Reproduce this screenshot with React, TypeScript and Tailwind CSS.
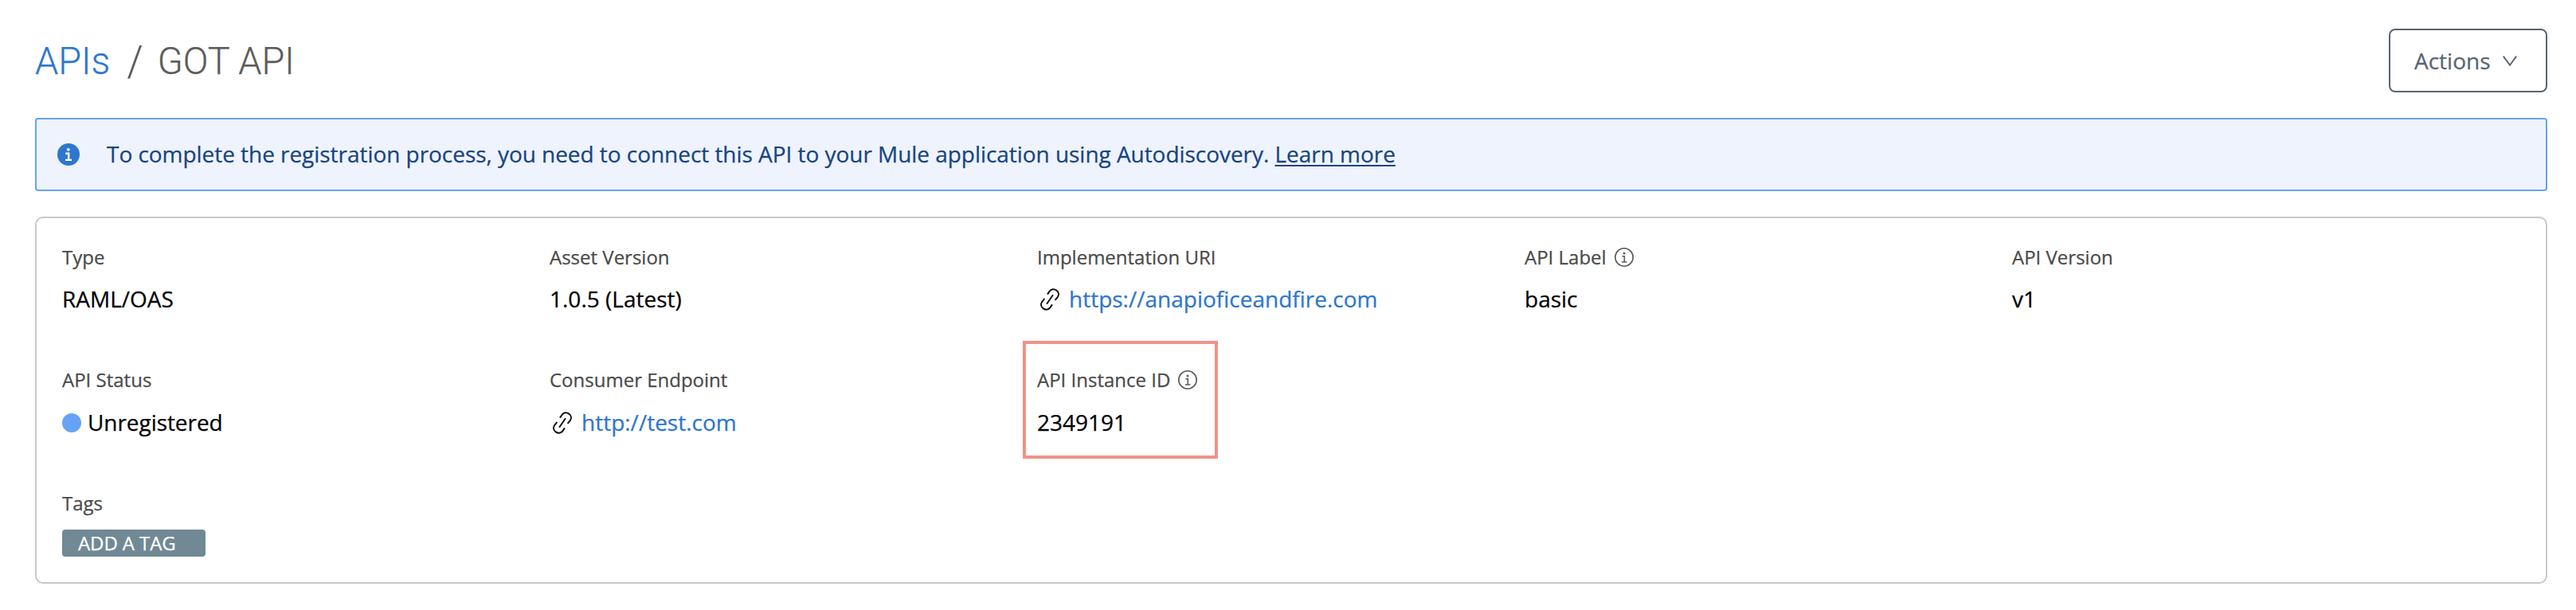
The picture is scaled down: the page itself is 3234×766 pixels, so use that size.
import type { ReactNode } from "react";

function InfoOutline() {
  return (
    <svg viewBox="0 0 24 24" className="ml-[10px] h-6 w-6 shrink-0" fill="none" stroke="#5b5b5b">
      <circle cx="12" cy="12" r="11.2" strokeWidth="1.6" />
      <circle cx="12" cy="6.9" r="1.5" fill="#5b5b5b" stroke="none" />
      <path d="M9.4 10.8H12.3V18M8.8 18H15.4" strokeWidth="1.6" />
    </svg>
  );
}

function InfoSolid() {
  return (
    <svg viewBox="0 0 28 28" className="h-7 w-7 shrink-0">
      <circle cx="14" cy="14" r="14" fill="#2e76ce" />
      <circle cx="13.8" cy="7.8" r="1.9" fill="#fff" />
      <path d="M10.2 12.8H14.2V20.9M10 20.9H18" stroke="#fff" strokeWidth="2.4" fill="none" />
    </svg>
  );
}

function LinkIcon() {
  return (
    <svg viewBox="0 0 24 28" className="mt-0.5 mr-3 ml-1 h-7 w-6 shrink-0" fill="none" stroke="#111" strokeWidth="2">
      <path d="M9 7.6 11.7 3.6C14 .6 17.8 .8 20.3 2.6C23 4.6 23.8 8 21.9 10.8L18.6 15" />
      <path d="M15 20.4 12.3 24.4C10 27.4 6.2 27.2 3.7 25.4C1 23.4 .2 20 2.1 17.2L5.4 13" />
      <path d="M8.1 19.7 16 8.3" />
    </svg>
  );
}

function Field({ label, info, children }: { label: string; info?: boolean; children: ReactNode }) {
  return (
    <div className="flex h-full w-[612px] flex-col justify-between">
      <div className="flex h-[34px] items-center text-[24px] leading-[34px] text-[#4a4a4a]">
        <span>{label}</span>
        {info && <InfoOutline />}
      </div>
      <div className="flex h-10 items-center text-[28px] leading-10 text-black">{children}</div>
    </div>
  );
}

export default function App() {
  return (
    <div className="h-[766px] w-[3234px] bg-white pr-9 pl-11 font-['Open_Sans',sans-serif] whitespace-nowrap [-webkit-text-stroke:0.25px]">
      <header className="flex h-[148px] items-start justify-between pt-9">
        <h1 className="flex h-[82px] origin-left scale-x-[0.955] items-center font-['Roboto',sans-serif] text-[49px] leading-[82px] font-light text-[#5c5c5c]">
          <a className="w-[121px] text-[#2e76ce]">APIs</a>
          <span className="w-[40px] text-[53px]">/</span>
          <span>GOT API</span>
        </h1>
        <button className="flex h-20 w-[199px] items-center rounded-lg border-2 border-[#566573] pl-[30px] text-[28px] leading-10 text-[#566573]">
          <span>Actions</span>
          <svg viewBox="0 0 18 13" className="ml-[15px] h-[13px] w-[18px]" fill="none" stroke="#566573" strokeWidth="1.9">
            <path d="M.8.6 9 11.8 17.2.6" />
          </svg>
        </button>
      </header>

      <div className="flex h-[92px] items-center rounded-[4px] border-2 border-[#67a2f5] bg-[#eff3fe] pl-[26px] text-[28px] leading-10 text-[#17457f]">
        <InfoSolid />
        <p className="mb-0.5 ml-[34px] tracking-[-0.045px]">
          To complete the registration process, you need to connect this API to your Mule application using Autodiscovery.{" "}
          <a className="underline decoration-2 underline-offset-[3px]">Learn more</a>
        </p>
      </div>

      <main className="mt-8 flex h-[461px] flex-col rounded-[10px] border-2 border-[#c8c8c8] pt-8 pl-8">
        <div className="mb-[65px] flex h-[89px]">
          <Field label="Type">RAML/OAS</Field>
          <Field label="Asset Version">1.0.5 (Latest)</Field>
          <Field label="Implementation URI">
            <LinkIcon />
            <a className="text-[#2e76ce]">https://anapioficeandfire.com</a>
          </Field>
          <Field label="API Label" info>basic</Field>
          <Field label="API Version">v1</Field>
        </div>
        <div className="mb-[65px] flex h-[90px]">
          <Field label="API Status">
            <span className="mt-px mr-2 h-6 w-6 rounded-full bg-[#67a2f5]" />
            <span className="tracking-[-0.06px]">Unregistered</span>
          </Field>
          <Field label="Consumer Endpoint">
            <LinkIcon />
            <a className="text-[#2e76ce]">http://test.com</a>
          </Field>
          <div className="relative">
            <Field label="API Instance ID" info>2349191</Field>
            <div className="absolute -top-8 -left-[18px] h-[148px] w-[245px] border-4 border-[#f19287]" />
          </div>
        </div>
        <div className="flex flex-col gap-4">
          <div className="h-[34px] text-[24px] leading-[34px] text-[#4a4a4a]">Tags</div>
          <button className="flex h-[34px] w-[180px] items-center rounded-[4px] bg-[#718995] pl-5 text-[24px] leading-[34px] tracking-[-0.1px] text-white">
            ADD A TAG
          </button>
        </div>
      </main>
    </div>
  );
}
